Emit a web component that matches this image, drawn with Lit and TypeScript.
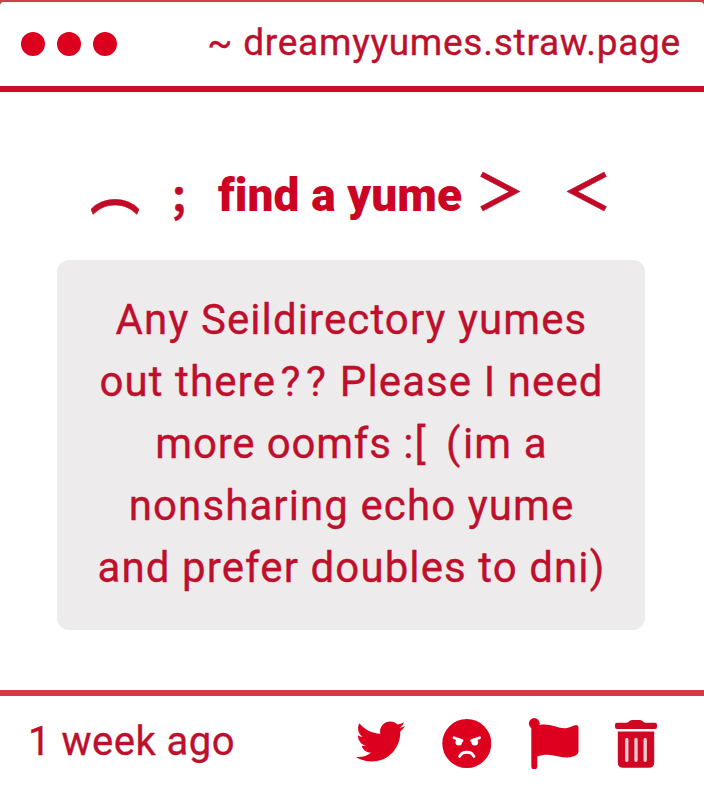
import { LitElement, html, css } from "lit";
import { customElement } from "lit/decorators.js";

const LINES = [
  html`Any Seildirectory yumes`,
  html`out ther<span class="marks">e?</span><span class="mark">?</span> Please I need`,
  html`<span class="tight">more oomfs</span> :<span class="loose">[ </span><span class="mark">(</span>im a`,
  html`nonsharing echo yume`,
  html`and prefer doubles to dni)`,
];

@customElement("app-root")
export class AppRoot extends LitElement {
  static styles = css`
    :host {
      display: flex;
      flex-direction: column;
      box-sizing: border-box;
      width: 704px;
      height: 788px;
      overflow: hidden;
      background: #cf3f4a;
      color: #be0f2d;
      font-family: Roboto, "Noto Sans CJK JP", sans-serif;
      font-variant-ligatures: none;
      padding-top: 2px;
    }
    header {
      display: flex;
      align-items: center;
      justify-content: space-between;
      box-sizing: border-box;
      height: 90px;
      padding: 0 23px 0 21px;
      background: #fff;
      border-radius: 4px 4px 0 0;
      border-bottom: 6px solid #c80d27;
    }
    .dots {
      display: flex;
      gap: 12px;
    }
    .dot {
      width: 24px;
      height: 24px;
      border-radius: 50%;
      background: #dc001e;
    }
    .site {
      font-size: 37px;
      letter-spacing: 0.75px;
      line-height: 44px;
      padding-bottom: 2px;
      white-space: pre;
      -webkit-text-stroke: 0.35px;
    }
    main {
      flex: 1;
      display: flex;
      flex-direction: column;
      align-items: center;
      padding-right: 2px;
      background: #fff;
    }
    h1 {
      display: flex;
      align-items: flex-start;
      margin: 71px 0 0;
      width: 522px;
      height: 64px;
      line-height: 64px;
      font-size: 46px;
      font-weight: 900;
      color: #cc0424;
      white-space: pre;
    }
    h1 span {
      flex: none;
    }
    .glyph {
      font-family: "Noto Sans CJK TC", sans-serif;
      font-weight: 700;
      font-size: 50px;
      line-height: 50px;
      width: 50px;
      color: #c00a28;
      -webkit-text-stroke: 0.5px;
    }
    .semi {
      font-size: 40px;
      line-height: 71px;
      width: 40px;
      margin: 0 19px;
    }
    .title {
      width: 257px;
      letter-spacing: 0.1px;
    }
    .lt {
      margin-left: 37px;
    }
    .message {
      box-sizing: border-box;
      width: 588px;
      height: 370px;
      margin-top: 33px;
      padding: 29px 0 0 1px;
      border-radius: 12px;
      background: #eeebec;
      text-align: center;
      font-size: 42px;
      line-height: 62px;
      letter-spacing: 1.1px;
      -webkit-text-stroke: 0.35px;
    }
    .line {
      white-space: pre;
    }
    .marks {
      letter-spacing: 5.5px;
    }
    .mark {
      letter-spacing: 2.5px;
    }
    .tight {
      letter-spacing: 0.8px;
    }
    .loose {
      letter-spacing: 5px;
    }
    footer {
      display: flex;
      align-items: center;
      justify-content: space-between;
      box-sizing: border-box;
      height: 98px;
      padding: 0 47px 0 28px;
      background: #fff;
      border-top: 6px solid #d13c45;
    }
    .age {
      font-size: 40px;
      letter-spacing: 0.5px;
      line-height: 48px;
      white-space: pre;
      -webkit-text-stroke: 0.35px;
    }
    .actions {
      display: flex;
      gap: 36px;
      padding-top: 2px;
    }
    .icon {
      display: block;
      height: 52px;
      fill: #dc001e;
    }
    .cut {
      fill: #fff;
    }
    .stroke {
      fill: none;
      stroke: #fff;
      stroke-width: 2.8;
      stroke-linecap: round;
    }
    .slot {
      stroke: #fbc9d0;
      stroke-width: 3.3;
    }
    .bin {
      fill: #d00723;
    }
  `;

  render() {
    return html`
      <header>
        <div class="dots">
          <span class="dot"></span><span class="dot"></span><span class="dot"></span>
        </div>
        <div class="site">~ dreamyyumes.straw.page</div>
      </header>
      <main>
        <h1>
          <span class="glyph">︵</span><span class="glyph semi">；</span><span class="title">find a yume</span><span class="glyph">＞</span><span class="glyph lt">＜</span>
        </h1>
        <div class="message">
          ${LINES.map((line) => html`<div class="line">${line}</div>`)}
        </div>
      </main>
      <footer>
        <div class="age">1 week ago</div>
        <div class="actions">
          <svg class="icon" width="50" viewBox="0 0 50 52">
            <path transform="translate(1 -0.2) scale(0.0963)" d="M459.37 151.716c.325 4.548.325 9.097.325 13.645 0 138.72-105.583 298.558-298.558 298.558-59.452 0-114.68-17.219-161.137-47.106 8.447.974 16.568 1.299 25.34 1.299 49.055 0 94.213-16.568 130.274-44.832-46.132-.975-84.792-31.188-98.112-72.772 6.498.974 12.995 1.624 19.818 1.624 9.421 0 18.843-1.3 27.614-3.573-48.081-9.747-84.143-51.98-84.143-102.985v-1.299c13.969 7.797 30.214 12.67 47.431 13.319-28.264-18.843-46.781-51.005-46.781-87.391 0-19.492 5.197-37.36 14.294-52.954 51.655 63.675 129.3 105.258 216.365 109.807-1.624-7.797-2.599-15.918-2.599-24.04 0-57.828 46.782-104.934 104.934-104.934 30.213 0 57.502 12.67 76.67 33.137 23.715-4.548 46.456-13.32 66.599-25.34-7.798 24.366-24.366 44.833-46.132 57.827 21.117-2.273 41.584-8.122 60.426-16.243-14.292 20.791-32.161 39.308-52.628 54.253z"/>
          </svg>
          <svg class="icon" width="50" viewBox="-1 0 50 52">
            <circle cx="24.8" cy="26.5" r="24.5"/>
            <circle class="cut" cx="16.800" cy="25.200" r="3.3"/>
            <circle class="cut" cx="32.800" cy="25.200" r="3.3"/>
            <path class="stroke" d="M12 20.800L20 23.600M37.600 20.800L29.600 23.600"/>
            <path class="stroke" d="M17.600 39.500C20 33.800 29.600 33.800 32 39.500"/>
          </svg>
          <svg class="icon" width="52" viewBox="-1 0 52 52">
            <circle cx="6.300" cy="6.500" r="5.4"/>
            <path d="M3.300 6H9.300V49.300A3 3 0 0 1 3.300 49.300Z"/>
            <path d="M6 9.500C20 4 28 11.500 37 11.200C43 11 45 8 48.300 8Q50.500 8 50.500 10.500V34.500C50.500 37 48 38.500 45 39.600C34 43.500 24 34 9 39.500Z"/>
          </svg>
          <svg class="icon" width="42" viewBox="0 0 42 52">
            <path class="bin" d="M2 5.700H11.500Q13.500 5.500 14 4.500Q15 3 17 3H25Q27 3 28 4.500Q28.500 5.500 30.500 5.700H40Q42 5.700 42 7.700V10Q42 12 40 12H2Q0 12 0 10V7.700Q0 5.700 2 5.700Z"/>
            <path class="bin" d="M2.800 14.500H39.200V45.500Q39.200 50.800 33.900 50.800H8.100Q2.800 50.800 2.800 45.500Z"/>
            <path class="stroke slot" d="M11.800 22.500V43.300M21 22.500V43.300M30.200 22.500V43.300"/>
          </svg>
        </div>
      </footer>
    `;
  }
}
